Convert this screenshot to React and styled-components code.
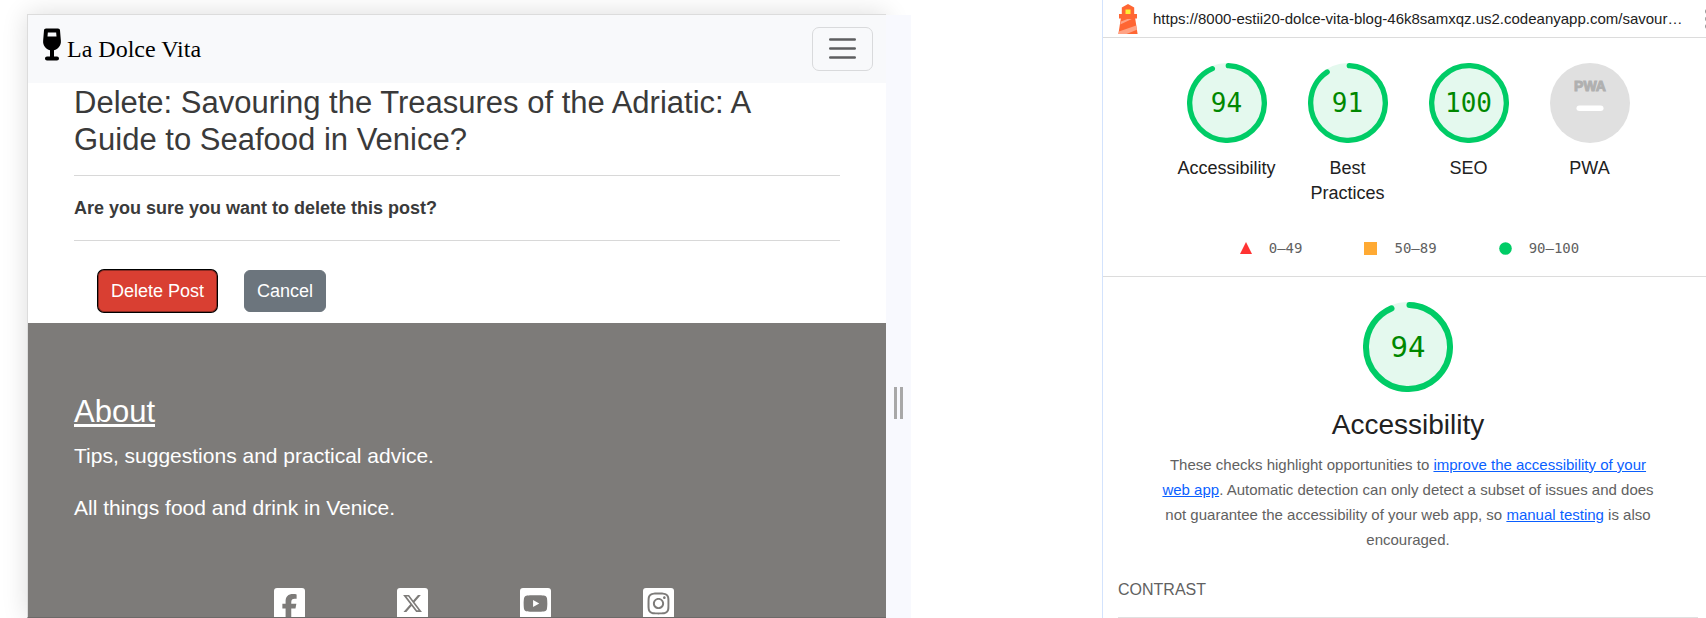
import React from 'react';
import styled, { createGlobalStyle } from 'styled-components';
import { FaWineGlass, FaFacebookF, FaXTwitter, FaYoutube, FaInstagram } from 'react-icons/fa6';

const GlobalStyle = createGlobalStyle`
  *, *::before, *::after { box-sizing: border-box; }
  body {
    margin: 0;
    background: #fff;
    font-family: "Liberation Sans", Arial, sans-serif;
  }
  h1, h2, h3, p, ul { margin: 0; padding: 0; font-weight: 400; }
  ul { list-style: none; }
`;

const Page = styled.div`
  display: flex;
  height: 100vh;
  overflow: hidden;
`;

/* ---------- Blog preview ---------- */

const Stage = styled.div`
  flex: 1;
  min-width: 0;
  display: flex;
  padding: 14px 191px 0 27px;
`;

const Device = styled.div`
  flex: 1;
  min-width: 0;
  display: flex;
  flex-direction: column;
  border: 1px solid #dcdcdc;
  border-right: 0;
  border-bottom-color: #6c6a69;
  background: #fff;
  box-shadow: 0 0 24px rgba(0, 0, 0, 0.14);
`;

const ResizeHandle = styled.div`
  position: relative;
  display: flex;
  align-items: flex-start;
  justify-content: center;
  gap: 3px;
  width: 25px;
  margin-top: 1px;
  padding-top: 372px;
  background: #f8f9fe;
`;

const HandleBar = styled.span`
  width: 3px;
  height: 32px;
  background: #a8a8a8;
`;

const NavBar = styled.header`
  flex: none;
  display: flex;
  align-items: center;
  justify-content: space-between;
  height: 68px;
  padding: 0 13px 1px 14px;
  background: #f8f9fb;
`;

const Brand = styled.a`
  display: flex;
  align-items: center;
  gap: 5px;
  color: #000;
  font-family: "Liberation Serif", serif;
  font-size: 24px;
  line-height: 32px;
  text-decoration: none;
`;

const BrandGlass = styled(FaWineGlass)`
  width: 20px;
  height: 33px;
  margin-bottom: 8px;
`;

const MenuButton = styled.button`
  display: flex;
  align-items: center;
  justify-content: center;
  width: 61px;
  height: 44px;
  padding: 0;
  border: 1px solid #d9dadc;
  border-radius: 7px;
  background: transparent;
  color: #5d5e60;
`;

const Content = styled.main`
  flex: none;
  padding: 1px 46px 11px;
  color: #3a3a3a;
`;

const Title = styled.h1`
  font-size: 31px;
  line-height: 37px;
`;

const Rule = styled.hr`
  height: 1px;
  margin: 17px 0;
  border: 0;
  background: #d8d8d8;
`;

const Question = styled.p`
  font-size: 18px;
  line-height: 30px;
  font-weight: 700;
`;

const Actions = styled.div`
  display: flex;
  gap: 27px;
  padding: 12px 24px 0;
`;

const ActionButton = styled.button`
  height: 42px;
  padding: 0 12px;
  border: 1px solid ${(p) => (p.$danger ? '#8c2a22' : '#6c757d')};
  border-radius: 6px;
  background: ${(p) => (p.$danger ? '#d93f32' : '#6c757d')};
  color: #fff;
  font-family: inherit;
  font-size: 18px;
  box-shadow: ${(p) => (p.$danger ? '0 0 0 1px #000' : 'none')};
`;

const Footer = styled.footer`
  flex: 1;
  min-height: 0;
  overflow: hidden;
  padding: 70px 46px 0;
  background: #7d7b79;
  color: #fff;
`;

const FooterTitle = styled.h2`
  margin-bottom: 10px;
  font-size: 31px;
  line-height: 37px;
  text-decoration: underline;
`;

const FooterText = styled.p`
  margin-bottom: 20px;
  font-size: 21px;
  line-height: 32px;
`;

const Social = styled.ul`
  display: flex;
  justify-content: center;
  gap: 92px;
  padding: 44px 0 0 34px;
`;

const SocialLink = styled.a`
  display: flex;
  align-items: ${(p) => (p.$toBottom ? 'flex-end' : 'center')};
  justify-content: center;
  width: 31px;
  height: 31px;
  border-radius: 3px;
  background: #fff;
  color: #7d7b79;
`;

/* ---------- Audit report ---------- */

const Panel = styled.aside`
  flex: 0 0 604px;
  overflow: hidden;
  border-left: 1px solid #d3e3fd;
`;

const Report = styled.div`
  margin-right: -7px;
`;

const TopBar = styled.div`
  display: flex;
  align-items: center;
  height: 38px;
  padding-left: 15px;
  border-bottom: 1px solid #dcdcdc;
  color: #212121;
  font-size: 15px;
`;

const TopUrl = styled.span`
  flex: 1;
  padding-left: 15px;
  white-space: nowrap;
`;

const Kebab = styled.button`
  display: flex;
  padding: 0;
  border: 0;
  background: none;
  color: #9a9a9a;
`;

const Scores = styled.ul`
  display: flex;
  justify-content: center;
  min-height: 183px;
  padding-top: 25px;
`;

const Score = styled.li`
  width: 121px;
`;

const ScoreLink = styled.a`
  display: flex;
  flex-direction: column;
  align-items: center;
  gap: 13px;
  padding: 0 20px;
  color: #212121;
  font-size: 18px;
  line-height: 25px;
  text-align: center;
  text-decoration: none;
`;

const GaugeBox = styled.span`
  display: grid;
  width: ${(p) => p.$size}px;
  height: ${(p) => p.$size}px;

  > * { grid-area: 1 / 1; }
`;

const GaugeValue = styled.span`
  place-self: center;
  color: #080;
  font-family: "DejaVu Sans Mono", monospace;
  font-size: ${(p) => p.$font}px;
  line-height: 32px;
`;

const Legend = styled.ul`
  display: flex;
  justify-content: center;
  gap: 62px;
  height: 56px;
  border-bottom: 1px solid #dcdcdc;
  color: #616161;
  font-family: "DejaVu Sans Mono", monospace;
  font-size: 14px;
  line-height: 24px;

  && { padding: 15px 0 0 3px; }
`;

const LegendItem = styled.li`
  display: flex;
  align-items: center;
  gap: 17px;
  height: 24px;
`;

const Category = styled.section`
  display: flex;
  flex-direction: column;
  align-items: center;
  padding: 25px 15px 0;
`;

const CategoryTitle = styled.h2`
  padding-top: 15px;
  color: #212121;
  font-size: 28px;
  line-height: 36px;
`;

const Description = styled.p`
  max-width: 500px;
  padding-top: 9px;
  color: #616161;
  font-size: 15px;
  line-height: 25px;
  text-align: center;

  a { color: #0a5fff; }
`;

const GroupTitle = styled.h3`
  align-self: stretch;
  padding: 26px 0 15px;
  border-bottom: 1px solid #e0e0e0;
  color: #616161;
  font-size: 16px;
  line-height: 24px;
  text-transform: uppercase;
`;

const CIRCUMFERENCE = 2 * Math.PI * 56;

function Gauge({ value, size, font }) {
  const arc = value === 100 ? CIRCUMFERENCE : (value / 100) * CIRCUMFERENCE - 4;
  return (
    <GaugeBox $size={size}>
      <svg viewBox="0 0 120 120" width={size} height={size} aria-hidden="true">
        <circle cx="60" cy="60" r="60" fill="#e4f9ee" />
        <circle
          cx="60"
          cy="60"
          r="56"
          fill="none"
          stroke="#0c6"
          strokeWidth="8"
          strokeLinecap="round"
          strokeDasharray={`${arc} ${CIRCUMFERENCE}`}
          transform="rotate(-88 60 60)"
        />
      </svg>
      <GaugeValue $font={font}>{value}</GaugeValue>
    </GaugeBox>
  );
}

function PwaBadge() {
  return (
    <svg viewBox="0 0 80 80" width="80" height="80" aria-hidden="true">
      <circle cx="40" cy="40" r="40" fill="#e0e0e0" />
      <text
        x="40"
        y="28"
        textAnchor="middle"
        fill="#b0b0b0"
        stroke="#b0b0b0"
        strokeWidth="1"
        fontFamily="Liberation Sans, Arial, sans-serif"
        fontSize="14"
        fontWeight="700"
      >
        PWA
      </text>
      <rect x="26.5" y="42.5" width="27" height="5.5" rx="2.75" fill="#fff" />
    </svg>
  );
}

function LighthouseLogo() {
  return (
    <svg width="20" height="30" viewBox="0 0 20 30" aria-hidden="true">
      <path d="M10 0l6.2 3.6V10H19v4.6h-1.8L19.6 30H.4l2.4-15.4H1V10h2.8V3.6z" fill="#ff6633" />
      <path d="M7.5 5.5h5V10h-5z" fill="#ffee33" />
      <path d="M3 17.6L9.4 15h4.4L2.2 20.6z M18.2 21.6l.7 4.2L8.5 30H.4l.5-2.4z" fill="#ffa385" />
    </svg>
  );
}

const scores = [
  { label: 'Accessibility', value: 94 },
  { label: 'Best Practices', value: 91 },
  { label: 'SEO', value: 100 },
  { label: 'PWA' },
];

const socials = [
  { name: 'Facebook', Icon: FaFacebookF, size: 25, toBottom: true },
  { name: 'X', Icon: FaXTwitter, size: 21 },
  { name: 'YouTube', Icon: FaYoutube, size: 25 },
  { name: 'Instagram', Icon: FaInstagram, size: 25 },
];

export default function App() {
  return (
    <>
      <GlobalStyle />
      <Page>
        <Stage>
          <Device>
            <NavBar>
              <Brand href="#home">
                <BrandGlass aria-hidden="true" />
                <span>La Dolce Vita</span>
              </Brand>
              <MenuButton type="button" aria-label="Toggle navigation">
                <svg width="27" height="21" viewBox="0 0 27 21" aria-hidden="true">
                  <path
                    d="M1.2 1.5h24.6M1.2 10.5h24.6M1.2 19.5h24.6"
                    stroke="currentColor"
                    strokeWidth="2.4"
                    strokeLinecap="round"
                  />
                </svg>
              </MenuButton>
            </NavBar>
            <Content>
              <Title>Delete: Savouring the Treasures of the Adriatic: A Guide to Seafood in Venice?</Title>
              <Rule />
              <Question>Are you sure you want to delete this post?</Question>
              <Rule />
              <Actions>
                <ActionButton type="button" $danger>Delete Post</ActionButton>
                <ActionButton type="button">Cancel</ActionButton>
              </Actions>
            </Content>
            <Footer>
              <FooterTitle>About</FooterTitle>
              <FooterText>Tips, suggestions and practical advice.</FooterText>
              <FooterText>All things food and drink in Venice.</FooterText>
              <Social>
                {socials.map(({ name, Icon, size, toBottom }) => (
                  <li key={name}>
                    <SocialLink href={`#${name.toLowerCase()}`} aria-label={name} $toBottom={toBottom}>
                      <Icon size={size} />
                    </SocialLink>
                  </li>
                ))}
              </Social>
            </Footer>
          </Device>
          <ResizeHandle>
            <HandleBar />
            <HandleBar />
          </ResizeHandle>
        </Stage>

        <Panel>
          <Report>
            <TopBar>
              <LighthouseLogo />
              <TopUrl>https://8000-estii20-dolce-vita-blog-46k8samxqz.us2.codeanyapp.com/savour…</TopUrl>
              <Kebab type="button" aria-label="Tools menu">
                <svg width="8" height="20" viewBox="0 0 8 20" fill="currentColor" aria-hidden="true">
                  <circle cx="2.5" cy="2.5" r="2.5" />
                  <circle cx="2.5" cy="10" r="2.5" />
                  <circle cx="2.5" cy="17.5" r="2.5" />
                </svg>
              </Kebab>
            </TopBar>
            <Scores>
              {scores.map(({ label, value }) => (
                <Score key={label}>
                  <ScoreLink href={`#${label.toLowerCase().replace(' ', '-')}`}>
                    {value ? <Gauge value={value} size={80} font={26} /> : <PwaBadge />}
                    <span>{label}</span>
                  </ScoreLink>
                </Score>
              ))}
            </Scores>
            <Legend>
              <LegendItem>
                <svg width="12" height="12" viewBox="0 0 12 12" aria-hidden="true">
                  <path d="M6 0l6 12H0z" fill="#f33" />
                </svg>
                0–49
              </LegendItem>
              <LegendItem>
                <svg width="13" height="13" viewBox="0 0 13 13" aria-hidden="true">
                  <path d="M0 0h13v13H0z" fill="#fa3" />
                </svg>
                50–89
              </LegendItem>
              <LegendItem>
                <svg width="13" height="13" viewBox="0 0 13 13" aria-hidden="true">
                  <circle cx="6.5" cy="6.5" r="6.3" fill="#0c6" />
                </svg>
                90–100
              </LegendItem>
            </Legend>
            <Category>
              <Gauge value={94} size={90} font={29} />
              <CategoryTitle>Accessibility</CategoryTitle>
              <Description>
                These checks highlight opportunities to{' '}
                <a href="#improve">improve the accessibility of your web app</a>. Automatic detection
                can only detect a subset of issues and does not guarantee the accessibility of your
                web app, so <a href="#manual">manual testing</a> is also encouraged.
              </Description>
              <GroupTitle>Contrast</GroupTitle>
            </Category>
          </Report>
        </Panel>
      </Page>
    </>
  );
}
